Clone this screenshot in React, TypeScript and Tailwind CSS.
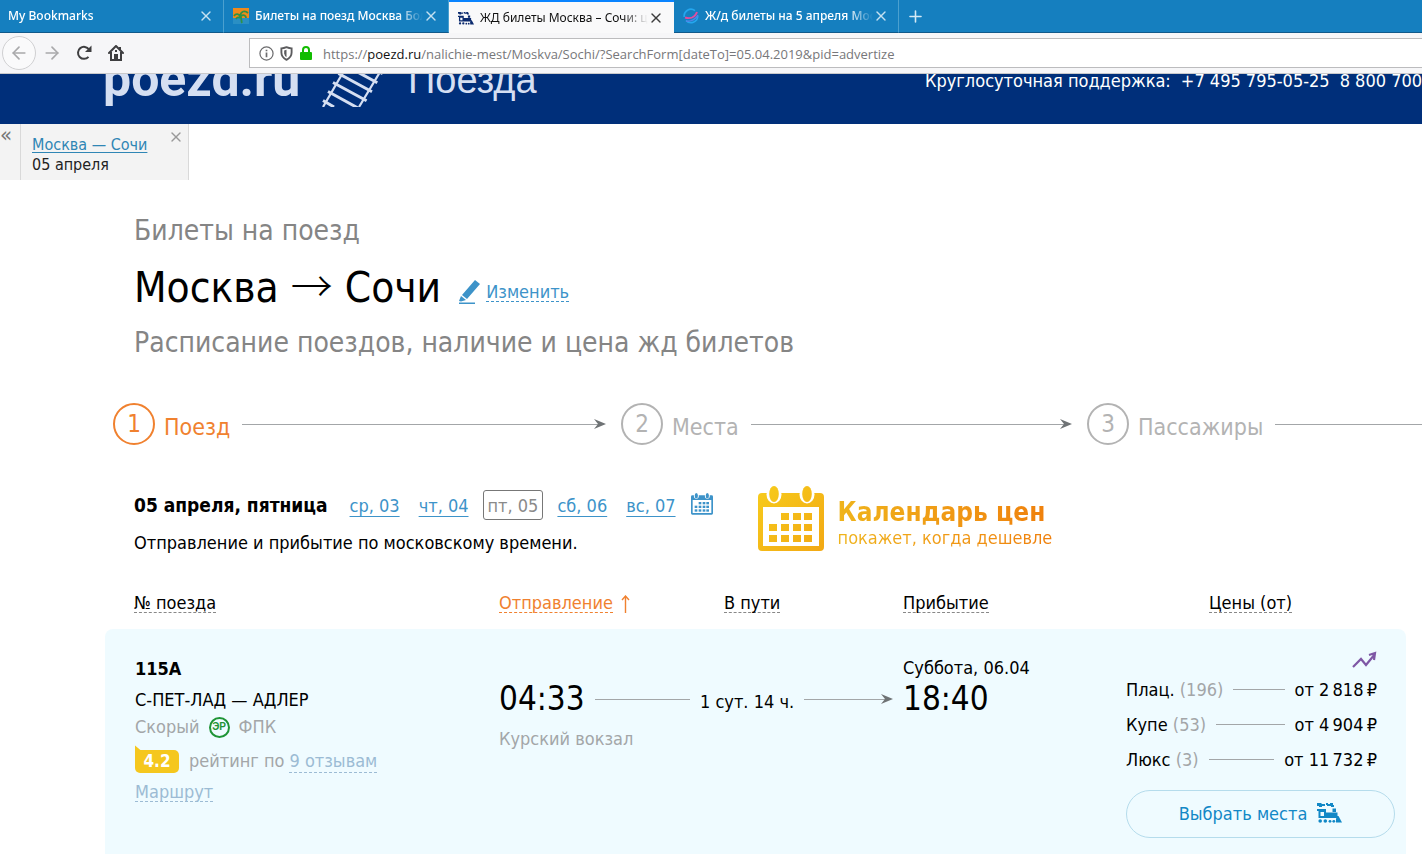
import { ArrowLeft, ArrowRight, Plus, X } from "lucide-react";

function Train({ className = "" }: { className?: string }) {
  return (
    <svg viewBox="0 0 25 21" fill="currentColor" aria-hidden="true" className={className}>
      <path d="M0 1h4l1 1h3v2H5v1H2V4H0zM9 1h2v1h2V1h3v2h1v2h-3V4h-4V3H9z" />
      <path d="M0 7h9v2H0zM15.500 6.500H19V10h-3.500z" />
      <path fillRule="evenodd" d="M1.500 9H9v1.500h11.500V16h-19zM3.500 10v4h3.500v-4z" />
      <path d="M20 14h1.500L25 20.500h-6V17z" />
      <circle cx="3.200" cy="19" r="1.800" />
      <circle cx="8.300" cy="19" r="1.800" />
      <circle cx="13" cy="19.300" r="1.400" />
      <circle cx="16.800" cy="19.300" r="1.400" />
    </svg>
  );
}

function Calendar({ className = "", gradient = false }: { className?: string; gradient?: boolean }) {
  const cells = [
    [23, 27], [35, 27], [46, 27],
    [11, 38], [23, 38], [35, 38], [46, 38],
    [11, 49], [23, 49], [35, 49], [46, 49],
  ];
  const paint = gradient ? "url(#gold)" : "currentColor";
  return (
    <svg viewBox="0 0 66 66" aria-hidden="true" className={className}>
      {gradient && (
        <defs>
          <linearGradient id="gold" x1="0" y1="0" x2="66" y2="66" gradientUnits="userSpaceOnUse">
            <stop offset="0" stopColor="#f7cc1c" />
            <stop offset="1" stopColor="#f2a814" />
          </linearGradient>
        </defs>
      )}
      <path fill={paint} fillRule="evenodd" d="M4 7h58q4 0 4 4v50q0 4-4 4H4q-4 0-4-4V11q0-4 4-4zM5 21v39h56V21z" />
      <ellipse cx="16" cy="8.500" rx="7.500" ry="9" fill="#fff" />
      <ellipse cx="49" cy="8.500" rx="7.500" ry="9" fill="#fff" />
      <ellipse cx="16" cy="8" rx="4.800" ry="8" fill={paint} />
      <ellipse cx="49" cy="8" rx="4.800" ry="8" fill={paint} />
      {cells.map(([x, y]) => (
        <rect key={`${x}-${y}`} x={x} y={y} width="8" height="7" fill={paint} />
      ))}
    </svg>
  );
}

function Rails() {
  return (
    <svg viewBox="0 0 64 50" className="h-[50px] w-16 shrink-0" stroke="#d5dff2" fill="none" aria-hidden="true">
      <path strokeWidth="2.200" d="M1 50 30 0M37 50 67 0" />
      <path strokeWidth="3" d="M1 43.500 12 50M6 34.500 36 51M11 25.500 44.600 43.700M16.400 16.500 50 34.700M21.600 7.500 55.300 25.700M27-1.500 60.700 16.700" />
    </svg>
  );
}

function Arrow({ head = true, className = "" }: { head?: boolean; className?: string }) {
  return (
    <span aria-hidden="true" className={`flex min-w-0 flex-1 items-center ${className}`}>
      <span className="h-px flex-1 bg-[#a3a6a8]" />
      {head && (
        <svg viewBox="0 0 12 10" className="-ml-2 h-[10px] w-3 shrink-0" fill="#6f7375">
          <path d="M0 0 12 5 0 10 4 5z" />
        </svg>
      )}
    </span>
  );
}

function Tab({ title, icon, active = false }: { title: string; icon?: React.ReactNode; active?: boolean }) {
  return (
    <div
      className={
        active
          ? "flex h-[33px] w-[225px] items-center border-t-2 border-[#0a84ff] bg-[#f9f9fa] pr-[10px] pl-[9px] text-[#111]"
          : "flex h-[33px] w-[225px] items-center border-r border-b border-r-[#4ba0cf] border-b-[#10598a] bg-[#157fbf] pr-[9px] pl-[9px] text-white first:w-[224px] first:pl-2"
      }
    >
      {icon && <span className="mr-[6px] flex size-4 shrink-0 items-center justify-center">{icon}</span>}
      <button
        type="button"
        className={
          "min-w-0 flex-1 overflow-hidden text-left text-[12px] whitespace-nowrap [mask-image:linear-gradient(to_right,#000_85%,transparent)] " +
          (active ? "" : "font-medium")
        }
      >
        {title}
      </button>
      <button type="button" aria-label={`Закрыть: ${title}`} className={active ? "text-[#3c3c3c]" : "text-[#c5e1f1]"}>
        <X size={16} strokeWidth={2} />
      </button>
    </div>
  );
}

function BrowserChrome() {
  return (
    <div className="shrink-0 font-['Noto_Sans','Open_Sans',sans-serif]">
      <div className="flex h-[33px] border-b border-[#10598a] bg-[#157fbf]">
        <Tab title="My Bookmarks" />
        <Tab
          title="Билеты на поезд Москва Болг"
          icon={
            <svg viewBox="0 0 16 16" className="size-4" aria-hidden="true">
              <path fill="#f08a1c" d="M0 0h16v10H0z" />
              <path fill="#2a8fc4" d="M0 10h16v6H0z" />
              <path stroke="#2f9147" strokeWidth="1.800" fill="none" d="M1 8c2-3 5-2 6 0 1-5 5-6 8-3M8 8c3-2 5 0 5 2M7 7c2 3 1 6 2 8M3 11c1-2 3-2 4-1" />
            </svg>
          }
        />
        <Tab active title="ЖД билеты Москва – Сочи: це" icon={<Train className="h-[14px] w-4 text-[#0b2a6e]" />} />
        <Tab
          title="Ж/д билеты на 5 апреля Моск"
          icon={
            <svg viewBox="0 0 16 16" className="size-4" fill="none" strokeWidth="1.600" aria-hidden="true">
              <path stroke="#24a7ee" d="M14.800 8A6.800 6.800 0 0 1 3 12.500M1.200 9A6.800 6.800 0 0 1 12 2.600" />
              <path stroke="#e04ca0" strokeWidth="2" d="M2 9.500c5 1.500 10 0 12-5.500" />
              <path stroke="#4f86e8" d="M3 13c5 1 10-2 12-6" />
            </svg>
          }
        />
        <button type="button" aria-label="Новая вкладка" className="flex w-8 items-center justify-center text-[#d4e9f5]">
          <Plus size={19} strokeWidth={2} />
        </button>
      </div>
      <div className="flex h-[41px] items-center border-b border-[#c9c9cb] bg-[#f6f6f8]">
        <button type="button" aria-label="Назад" className="ml-[2px] flex size-[34px] items-center justify-center rounded-full border border-[#d0d0d2] bg-[#fafafb] text-[#a9a9ab]">
          <ArrowLeft size={20} strokeWidth={2} />
        </button>
        <button type="button" aria-label="Вперёд" className="ml-[6px] text-[#a9a9ab]">
          <ArrowRight size={20} strokeWidth={2} />
        </button>
        <button type="button" aria-label="Обновить" className="ml-[14px] text-[#3e3e40]">
          <svg viewBox="0 0 16 16" className="size-4" aria-hidden="true">
            <path fill="none" stroke="currentColor" strokeWidth="2" d="M12.500 11.800A6 6 0 1 1 13 4.500" />
            <path fill="currentColor" d="M15.500 .5V7H9z" />
          </svg>
        </button>
        <button type="button" aria-label="Домой" className="ml-4 text-[#3e3e40]">
          <svg viewBox="0 0 16 16" className="size-4" fill="none" stroke="currentColor" strokeWidth="2" aria-hidden="true">
            <path strokeLinecap="round" strokeLinejoin="round" d="M1 8 8 1l7 7" />
            <path d="M3 7v8h10V7M12 2v3" />
            <path fill="currentColor" stroke="none" d="M6 9h4v6H6zM7 5h2v2H7z" />
          </svg>
        </button>
        <div className="ml-[125px] flex h-[30px] flex-1 items-center border border-r-0 border-[#bcbcbe] bg-white pl-[9px]">
          <svg viewBox="0 0 16 16" className="size-[15px] text-[#6c6c6e]" fill="none" stroke="currentColor" aria-hidden="true">
            <circle cx="8" cy="8" r="7" strokeWidth="1.300" />
            <path strokeWidth="1.800" d="M8 7v5M8 4v1.600" />
          </svg>
          <svg viewBox="0 0 14 16" className="ml-[6px] h-[15px] w-[13px] text-[#5c5c5e]" aria-hidden="true">
            <path fill="none" stroke="currentColor" strokeWidth="2" d="M1.500 2.500Q4 2.500 7 1.200 10 2.500 12.500 2.500V7Q12.500 12 7 14.800 1.500 12 1.500 7z" />
            <path fill="currentColor" d="M7 4 4.500 4.800V8q.3 2.500 2.500 4z" />
          </svg>
          <svg viewBox="0 0 12 14" className="ml-[7px] h-[14px] w-3" aria-hidden="true">
            <path fill="none" stroke="#12bc00" strokeWidth="2" d="M3 7V4a3 3 0 0 1 6 0v3" />
            <rect y="6" width="12" height="8" rx="1" fill="#12bc00" />
          </svg>
          <div
            role="textbox"
            aria-label="Адрес страницы"
            contentEditable
            suppressContentEditableWarning
            className="ml-[11px] flex-1 pt-[2px] font-['Open_Sans','Noto_Sans',sans-serif] text-[13px] leading-5 whitespace-nowrap text-[#77777a] outline-none"
          >
            https://<span className="text-[#111]">poezd.ru</span>
            /nalichie-mest/Moskva/Sochi/?SearchForm[dateTo]=05.04.2019&amp;pid=advertize
          </div>
        </div>
      </div>
    </div>
  );
}

function SiteHeader() {
  return (
    <header className="flex h-[50px] shrink-0 items-end overflow-hidden bg-[#002f7a] pl-[103px] whitespace-nowrap">
      <a href="#" className="flex items-end text-[#d5dff2]">
        <span className="w-[219px] pb-[18px] font-['Roboto',sans-serif] text-[50px] leading-[54px] font-bold">poezd.ru</span>
        <span className="pb-[17px]"><Rails /></span>
        <span className="ml-[22px] pb-[22px] font-['Liberation_Sans',sans-serif] text-[38px] leading-[44px]">Поезда</span>
      </a>
      <p className="ml-auto flex w-[497px] shrink-0 gap-[10px] pb-[33px] text-[18px] leading-[20px] text-white">
        <span>Круглосуточная поддержка:</span>
        <span>+7 495 795-05-25</span>
        <span>8 800 700</span>
      </p>
    </header>
  );
}

function SearchTabs() {
  return (
    <div className="flex h-14 w-[189px] border-r border-[#d9d9d9] bg-[#f3f3f3] text-[16px] leading-5">
      <button type="button" aria-label="Свернуть" className="flex w-[21px] items-start border-r border-[#d9d9d9] text-[22px] leading-[22px] text-[#777]">
        «
      </button>
      <div className="flex-1 pt-[11px] pl-[11px]">
        <a href="#" className="text-[#2f86b5] underline underline-offset-2">Москва — Сочи</a>
        <p className="text-[#222]">05 апреля</p>
      </div>
      <button type="button" aria-label="Закрыть поиск" className="mt-[5px] mr-1 self-start text-[#999]">
        <X size={16} strokeWidth={2} />
      </button>
    </div>
  );
}

function Steps() {
  const steps = [
    { n: 1, label: "Поезд", size: "flex-[508]", tone: "text-[#f0812f]" },
    { n: 2, label: "Места", size: "flex-[466]", tone: "text-[#b3b3b3]" },
    { n: 3, label: "Пассажиры", size: "flex-[335]", tone: "text-[#b3b3b3]" },
  ];
  return (
    <ol className="mt-[40px] flex pl-[113px]">
      {steps.map((s) => (
        <li key={s.n} className={`flex min-w-0 items-center ${s.size} ${s.tone}`}>
          <span className="flex size-[42px] shrink-0 items-center justify-center rounded-full border-2 border-current text-[24px] leading-none">{s.n}</span>
          <span className="mr-3 ml-[9px] pt-[6px] text-[23px] leading-8">{s.label}</span>
          <Arrow head={s.n < 3} className={s.n < 3 ? "mr-[15px]" : ""} />
        </li>
      ))}
    </ol>
  );
}

function Dates() {
  const link = "text-[#3d93c9] underline underline-offset-4";
  return (
    <section className="flex items-start pl-[134px]">
      <div className="pt-1">
        <div className="flex h-[30px] items-center text-[18px]">
          <h3 className="mr-[22px] text-[19px] font-bold">05 апреля, пятница</h3>
          <a href="#" className={link}>ср, 03</a>
          <a href="#" className={`ml-[19px] ${link}`}>чт, 04</a>
          <span className="mx-[14px] flex h-[30px] items-center rounded-[3px] border border-[#777] px-1 text-[#8a8a8a]">пт, 05</span>
          <a href="#" className={link}>сб, 06</a>
          <a href="#" className={`ml-[19px] ${link}`}>вс, 07</a>
          <button type="button" aria-label="Выбрать дату" className="ml-[15px] pb-[2px] text-[#3d93c9]">
            <Calendar className="size-[22px]" />
          </button>
        </div>
        <p className="mt-[10px] text-[18px] leading-[26px]">Отправление и прибытие по московскому времени.</p>
      </div>
      <a href="#" className="ml-[45px] flex">
        <Calendar gradient className="size-[66px]" />
        <span className="ml-[14px] bg-linear-to-r from-[#efb41c] to-[#ef7f0c] bg-clip-text pt-[9px] text-transparent">
          <strong className="block text-[26px] leading-[34px] font-bold">Календарь цен</strong>
          <span className="block text-[18px] leading-[18px]">покажет, когда дешевле</span>
        </span>
      </a>
    </section>
  );
}

const sort = "border-b border-dashed border-[#888] text-[18px] leading-[18px] font-normal";

function Trains() {
  const prices = [
    { type: "Плац.", seats: 196, price: "2\u2009818" },
    { type: "Купе", seats: 53, price: "4\u2009904" },
    { type: "Люкс", seats: 3, price: "11\u2009732" },
  ];
  return (
    <div className="mt-[35px] pr-4 pl-[105px]">
      <table className="w-full table-fixed border-collapse text-left text-[18px] leading-6">
        <colgroup>
          <col className="w-[394px]" />
          <col className="w-[201px]" />
          <col className="w-[203px]" />
          <col className="w-[223px]" />
          <col />
        </colgroup>
        <thead>
          <tr className="h-[38px] align-top">
            <th className="pl-[29px]"><button type="button" className={sort}>№ поезда</button></th>
            <th className="text-[#f0812f]">
              <button type="button" className="border-b border-dashed border-[#f0812f] text-[18px] leading-[18px] font-normal">Отправление</button>
              <svg viewBox="0 0 9 18" className="ml-2 inline h-[18px] w-[9px]" fill="none" stroke="currentColor" strokeWidth="1.400" aria-hidden="true">
                <path d="M4.500 18V1M1 5l3.500-4L8 5" />
              </svg>
            </th>
            <th className="pl-6"><button type="button" className={sort}>В пути</button></th>
            <th><button type="button" className={sort}>Прибытие</button></th>
            <th className="pl-[83px]"><button type="button" className={sort}>Цены (от)</button></th>
          </tr>
        </thead>
        <tbody>
          <tr className="bg-[#effbff] align-top">
            <td className="rounded-tl-[8px] pt-7 pb-16 pl-[30px]">
              <p className="font-bold">115А</p>
              <p className="mt-[7px]">С-ПЕТ-ЛАД — АДЛЕР</p>
              <p className="mt-[3px] flex items-center text-[#a3a6a8]">
                Скорый
                <span className="mx-[9px] flex size-[21px] items-center justify-center rounded-full border-2 border-[#1f9436] font-['Liberation_Sans',sans-serif] text-[10px] font-bold text-[#1f9436]">ЭР</span>
                ФПК
              </p>
              <p className="mt-[10px] flex items-center text-[#a3a6a8]">
                <span className="relative mr-[10px] flex h-[23px] w-11 items-center justify-center rounded-[5px] rounded-tl-none bg-[#f5c71e] text-[17px] font-bold text-white">
                  <svg viewBox="0 0 6 5" className="absolute -top-[5px] left-0 h-[6px] w-[6px]" fill="#f5c71e" aria-hidden="true"><path d="M0 0 6 5H0z" /></svg>
                  4.2
                </span>
                рейтинг по
                <a href="#" className="ml-[5px] border-b border-dashed border-[#9cbbd4] leading-[22px] text-[#9cbbd4]">9 отзывам</a>
              </p>
              <a href="#" className="mt-[10px] inline-block border-b border-dashed border-[#9cbbd4] leading-[18px] text-[#9cbbd4]">Маршрут</a>
            </td>
            <td className="pt-[50px]">
              <div className="flex items-center">
                <time className="text-[33px] leading-10">04:33</time>
                <Arrow head={false} className="mx-[10px]" />
              </div>
              <p className="mt-2 text-[#a3a6a8]">Курский вокзал</p>
            </td>
            <td className="pt-[50px]">
              <div className="flex h-10 items-center">
                <span className="pt-[6px]">1 сут. 14 ч.</span>
                <Arrow className="mx-[10px]" />
              </div>
            </td>
            <td className="pt-7">
              <p className="leading-[22px]">Суббота, 06.04</p>
              <time className="block text-[33px] leading-10">18:40</time>
            </td>
            <td className="rounded-tr-[8px] pt-[22px] pr-[11px]">
              <div className="pr-[18px]">
                <svg viewBox="0 0 25 18" className="ml-auto h-[18px] w-[25px]" fill="none" stroke="#7e57a5" strokeWidth="2.200" aria-hidden="true">
                  <path d="m1 16 8-8 5 6L23 3M17 4l6-2-1 7" />
                </svg>
                <ul className="mt-[3px]">
                  {prices.map((p) => (
                    <li key={p.type} className="flex h-[35px] items-center">
                      <span>{p.type} <span className="text-[#a3a6a8]">({p.seats})</span></span>
                      <span className="mx-[10px] h-px flex-1 bg-[#a3a6a8]" />
                      <span>от {p.price}{"\u2009"}₽</span>
                    </li>
                  ))}
                </ul>
              </div>
              <button type="button" className="mt-[13px] flex h-12 w-full items-center justify-center gap-[10px] rounded-full border border-[#b5dcec] text-[#1288c6]">
                Выбрать места
                <Train className="mb-1 h-[21px] w-[25px]" />
              </button>
            </td>
          </tr>
        </tbody>
      </table>
    </div>
  );
}

export default function App() {
  return (
    <div className="flex h-screen flex-col overflow-hidden bg-white font-['DejaVu_Sans_Condensed','DejaVu_Sans',sans-serif] text-black">
      <BrowserChrome />
      <SiteHeader />
      <main className="min-h-0 flex-1 overflow-hidden">
        <SearchTabs />
        <div className="pt-[31px] pl-[134px]">
          <p className="text-[28px] leading-10 text-[#858585]">Билеты на поезд</p>
          <div className="mt-[7px] flex items-center">
            <h1 className="text-[42px] leading-[60px]">
              Москва <span className="font-['Noto_Sans_CJK_JP',sans-serif] leading-none font-light">→</span> Сочи
            </h1>
            <button type="button" className="ml-[18px] flex items-center gap-[6px] pt-2 text-[18px] text-[#3d93c9]">
              <svg viewBox="0 0 21 24" className="h-6 w-[21px]" fill="currentColor" aria-hidden="true">
                <path d="m16 0 5 4L8 19l-5-4zM2 16l5 4-5 1.500L0 21zM0 22.500h16V24H0z" />
              </svg>
              <span className="border-b border-dashed border-[#3d93c9] leading-[18px]">Изменить</span>
            </button>
          </div>
          <h2 className="mt-[5px] text-[28px] leading-10 text-[#858585]">Расписание поездов, наличие и цена жд билетов</h2>
        </div>
        <Steps />
        <div className="mt-[41px]">
          <Dates />
        </div>
        <Trains />
      </main>
    </div>
  );
}
